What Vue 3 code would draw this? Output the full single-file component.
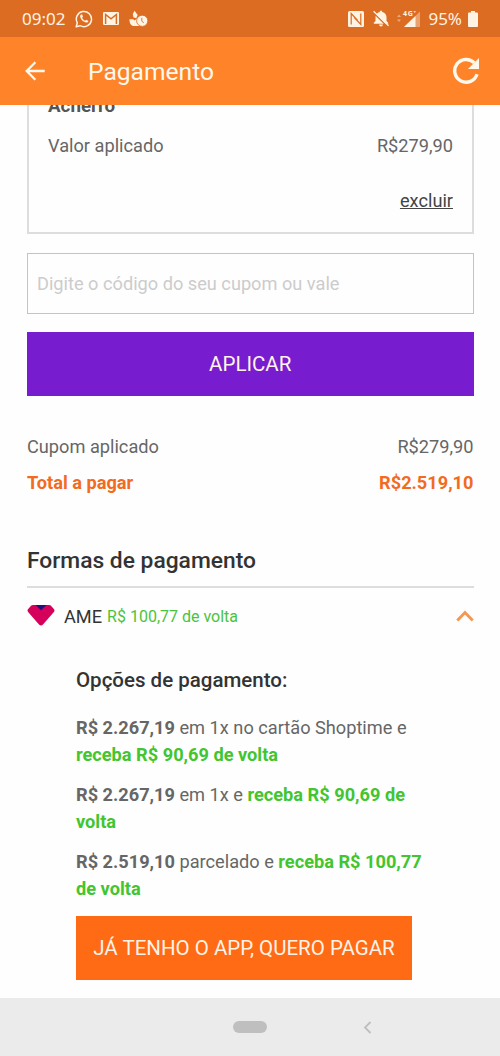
<script setup>
const options = [
  { price: 'R$ 2.267,19', middle: 'em 1x no cartão Shoptime e', reward: 'receba R$ 90,69 de volta' },
  { price: 'R$ 2.267,19', middle: 'em 1x e', reward: 'receba R$ 90,69 de volta' },
  { price: 'R$ 2.519,10', middle: 'parcelado e', reward: 'receba R$ 100,77 de volta' },
]
</script>

<template>
  <div class="screen">
    <div class="status">
      <span class="clock">09:02</span>
      <svg class="wa" width="18" height="18" viewBox="0 0 18 18" fill="none">
        <path d="M1.2 16.8 2.3 12.8A7.6 7.6 0 1 1 5.2 15.7Z" stroke="currentColor" stroke-width="1.5" stroke-linejoin="round" />
        <path d="M6.1 4.6c-.9.5-1.2 1.5-.8 2.6 1 2.800 3 4.600 5.600 5.300 1.100.3 2.300-.3 2.500-1.600l-2.200-1.200-1.100 1.100C8.800 10.200 7.700 9 7.100 7.700l.9-1-.8-2.100z" fill="currentColor" />
      </svg>
      <svg class="mail" width="16" height="13" viewBox="0 0 16 13">
        <rect width="16" height="13" rx="1.3" fill="currentColor" />
        <path d="M2.600 12V2.500L8 6.900l5.400-4.400V12" stroke="#db6c22" stroke-width="1.500" fill="none" />
      </svg>
      <svg class="people" width="19" height="17" viewBox="0 0 19 17">
        <path d="M5.500.8 8.700 5 7.200 8.300 4.400 7.200 3.800 4Z" fill="currentColor" />
        <path d="M.4 9.300h3.800l1.400 1.100 3-2.300 2 8H5C2.200 16 .4 13.600.4 9.300Z" fill="currentColor" />
        <circle cx="13.200" cy="10.800" r="5.600" fill="currentColor" stroke="#db6c22" stroke-width=".8" />
        <path d="M12.800 7.800v3.400l2 1.600" stroke="#db6c22" stroke-width=".9" fill="none" />
      </svg>
      <span class="spring"></span>
      <svg class="nfc" width="16" height="16" viewBox="0 0 16 16">
        <rect width="16" height="16" rx="1.500" fill="currentColor" />
        <path d="M3.200 13.500V2.500L9.700 9.500M6.300 6.500l6.500 7V2.500" fill="none" stroke="#db6c22" stroke-width="1.200" />
      </svg>
      <svg class="bell" width="18" height="17" viewBox="0 0 18 17">
        <path d="M9 .5q1.300 0 1.300 1.600c2.800.7 4.200 2.700 4.200 5.200v3.800l1.700 1.600v1H1.800v-1l1.700-1.600V7.300c0-2.500 1.400-4.500 4.200-5.200Q7.700.5 9 .5ZM7 14.500h4Q10.700 16.500 9 16.500T7 14.500Z" fill="currentColor" />
        <path d="m1 2.200 14.500 14.300" stroke="#db6c22" stroke-width="1.500" />
        <path d="m1.600 1.200 15 14.500" stroke="currentColor" stroke-width="1.300" />
      </svg>
      <svg class="signal" width="25" height="18" viewBox="0 0 25 18">
        <path d="m1 7 2-2.500L5 7ZM1 9.500h4L3 12Z" fill="currentColor" opacity=".45" />
        <path d="M8 17 24 1.500V17Z" fill="currentColor" opacity=".4" />
        <path d="M8 17 19.500 6v11Z" fill="currentColor" />
        <text x="7" y="6" font-size="7" font-weight="700" fill="currentColor" font-family="Noto Sans, sans-serif" textLength="13">4G⁺</text>
      </svg>
      <span class="pct">95%</span>
      <svg class="battery" width="10" height="16" viewBox="0 0 10 16"><path d="M3 0h4v1.500h2q1 0 1 1V15q0 1-1 1H1q-1 0-1-1V2.500q0-1 1-1h2Z" fill="currentColor" /></svg>
    </div>

    <header class="bar">
      <svg class="back" width="20" height="20" viewBox="0 0 20 20" fill="none" stroke="currentColor" stroke-width="2.300"><path d="M19.700 10H2M10.300 1.300 1.700 10l8.600 8.700" /></svg>
      <h1>Pagamento</h1>
      <svg class="reload" width="28" height="28" viewBox="0 0 28 28">
        <path d="M22.300 5.900A11.400 11.400 0 1 0 25 17.300" fill="none" stroke="currentColor" stroke-width="3.400" />
        <path d="M27 1v11H16Z" fill="currentColor" />
      </svg>
    </header>

    <main>
      <section class="voucher">
        <div class="name">Acherro</div>
        <div class="row"><span>Valor aplicado</span><span>R$279,90</span></div>
        <div class="remove"><a>excluir</a></div>
      </section>

      <div class="field"><span>Digite o código do seu cupom ou vale</span></div>
      <button class="apply"><span>APLICAR</span></button>

      <div class="row coupon"><span>Cupom aplicado</span><span>R$279,90</span></div>
      <div class="row total"><span>Total a pagar</span><span>R$2.519,10</span></div>

      <h2><span>Formas de pagamento</span></h2>
      <div class="ame">
        <svg class="gem" width="28" height="22" viewBox="0 0 28 22">
          <path d="M6 1h16q1.200 0 2 .8l3 3.500q1 1.300-.1 2.600L16 20.500q-2 2-4 0L1.100 7.900Q0 6.600 1 5.300l3-3.500Q4.800 1 6 1Z" fill="#d5005b" />
          <path d="M8.500 1h11L14 6.300Z" fill="#20107c" />
        </svg>
        <span class="brand">AME</span>
        <span class="cash">R$ 100,77 de volta</span>
        <svg class="caret" width="18" height="12" viewBox="0 0 18 12" fill="none"><path d="m1.300 10.500 7.700-8 7.700 8" stroke="#f5974f" stroke-width="2.900" /></svg>
      </div>

      <section class="options">
        <h3>Opções de pagamento:</h3>
        <p v-for="(o, i) in options" :key="i"><b>{{ o.price }}</b> {{ o.middle }} <b class="green">{{ o.reward }}</b></p>
        <button class="pay"><span>JÁ TENHO O APP, QUERO PAGAR</span></button>
      </section>
    </main>

    <nav>
      <i class="pill"></i>
      <svg width="9" height="13" viewBox="0 0 9 13" fill="none"><path d="M7.500 1 2 6.500 7.500 12" stroke="#bebebe" stroke-width="1.800" /></svg>
    </nav>
  </div>
</template>

<style>
body { margin: 0; background: #fefefe; }
</style>

<style scoped>
* { box-sizing: border-box; }
.screen { width: 500px; height: 1056px; display: flex; flex-direction: column; overflow: hidden; background: #fefefe; color: #666; font-family: Roboto, sans-serif; font-size: 18.2px; }
.status { height: 37px; flex: none; display: flex; align-items: center; padding: 0 22px; background: #db6c22; color: #fff3e3; font: 17px "Noto Sans", sans-serif; }
.wa { margin-left: 10px; }
.mail { margin-left: 10px; }
.people { margin-left: 10px; }
.spring { flex: 1; }
.bell { margin-left: 8px; }
.signal { margin-left: 6px; }
.pct { margin-left: 7px; }
.battery { margin-left: 6px; }
.bar { height: 68px; flex: none; display: flex; align-items: center; padding: 0 20px 0 25px; background: #ff8429; color: #fff8ec; }
h1 { margin: 2px 0 0 43px; flex: 1; font-size: 24.600px; font-weight: 400; line-height: 30px; }
main { flex: 1; min-height: 0; padding: 0 26.500px 0 27px; overflow: hidden; }
.row { display: flex; justify-content: space-between; line-height: 22px; }
.voucher { display: flow-root; height: 129px; border: 2px solid #ddd; border-top: 0; padding: 0 18.500px 0 19px; }
.name { height: 30px; margin-top: -10px; line-height: 22px; font-size: 18.800px; font-weight: 700; color: #555; }
.voucher .row { margin-top: 10px; }
.remove { margin-top: 33px; text-align: right; line-height: 22px; color: #444; }
.remove a { text-decoration: underline; }
.field { height: 61px; margin-top: 19px; border: 1px solid #c4c4c4; padding: 0 9px; display: flex; align-items: center; color: #ccc; }
button { display: flex; align-items: center; justify-content: center; border: 0; padding: 0; color: #fff3e8; font: 20.500px Roboto, sans-serif; white-space: nowrap; }
.apply { width: 100%; height: 64px; margin-top: 18px; background: #771dcf; }
.coupon { margin-top: 40px; }
.total { margin-top: 14px; color: #f26b21; font-weight: 700; }
h2 { height: 94px; margin: 0; padding-top: 53px; border-bottom: 2px solid #ddd; color: #333; font-size: 22.800px; line-height: 28px; font-weight: 500; }
.ame { height: 57px; display: flex; align-items: center; }
.gem { margin-bottom: 3px; }
.brand { margin-left: 9px; color: #333; }
.cash { margin-left: 5px; font-size: 16px; color: #4bc33d; }
.caret { margin: 0 0 2px auto; }
.options { padding: 0 49px; }
h3 { margin: 20px 0 19px; font-size: 20.500px; line-height: 30px; font-weight: 500; color: #333; }
p { margin: 0 0 13px; line-height: 27.100px; }
.green { color: #42c52e; }
.pay { width: 336px; height: 64px; background: #ff6a14; }
nav { height: 58px; flex: none; display: flex; align-items: center; padding-left: 233px; background: #ebebeb; }
.pill { width: 34px; height: 12px; border-radius: 6px; background: #bfbfbf; }
nav svg { margin-left: 96px; }
</style>
